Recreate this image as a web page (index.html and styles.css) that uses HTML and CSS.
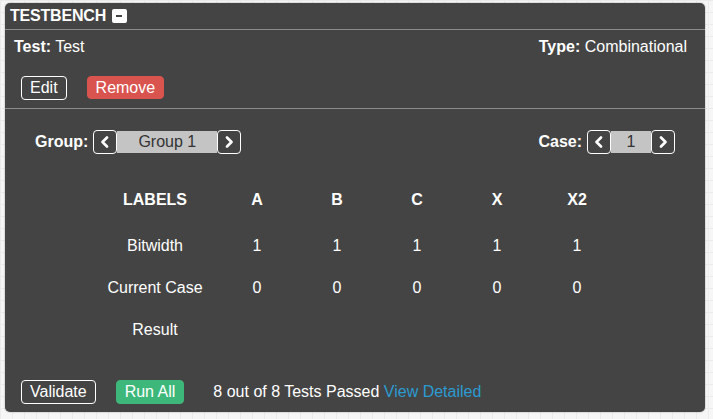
FILE: index.html
```html
<!DOCTYPE html>
<html>
<head>
<meta charset="utf-8">
<link rel="stylesheet" href="styles.css">
</head>
<body>
<div class="panel">
  <div class="header">
    <span class="title">TESTBENCH</span>
    <span class="minimize"><span class="bar"></span></span>
  </div>
  <div class="section top">
    <div class="info">
      <span><b>Test:</b> Test</span>
      <span><b>Type:</b> Combinational</span>
    </div>
    <div class="actions">
      <button class="btn outline">Edit</button>
      <button class="btn red">Remove</button>
    </div>
  </div>
  <div class="section main">
    <div class="selectors">
      <div class="sel">
        <span class="sel-label">Group:</span>
        <span class="arrow"><svg width="10" height="12" viewBox="0 0 10 12"><polyline points="7,1.5 2.5,6 7,10.5" fill="none" stroke="#fff" stroke-width="2.6" stroke-linecap="round" stroke-linejoin="round"/></svg></span>
        <span class="sel-value wide">Group 1</span>
        <span class="arrow"><svg width="10" height="12" viewBox="0 0 10 12"><polyline points="3,1.5 7.5,6 3,10.5" fill="none" stroke="#fff" stroke-width="2.6" stroke-linecap="round" stroke-linejoin="round"/></svg></span>
      </div>
      <div class="sel">
        <span class="sel-label">Case:</span>
        <span class="arrow"><svg width="10" height="12" viewBox="0 0 10 12"><polyline points="7,1.5 2.5,6 7,10.5" fill="none" stroke="#fff" stroke-width="2.6" stroke-linecap="round" stroke-linejoin="round"/></svg></span>
        <span class="sel-value narrow">1</span>
        <span class="arrow"><svg width="10" height="12" viewBox="0 0 10 12"><polyline points="3,1.5 7.5,6 3,10.5" fill="none" stroke="#fff" stroke-width="2.6" stroke-linecap="round" stroke-linejoin="round"/></svg></span>
      </div>
    </div>
    <table class="grid">
      <tr class="head"><th class="first">LABELS</th><th>A</th><th>B</th><th>C</th><th>X</th><th>X2</th></tr>
      <tr><td class="first">Bitwidth</td><td>1</td><td>1</td><td>1</td><td>1</td><td>1</td></tr>
      <tr><td class="first">Current Case</td><td>0</td><td>0</td><td>0</td><td>0</td><td>0</td></tr>
      <tr><td class="first">Result</td><td></td><td></td><td></td><td></td><td></td></tr>
    </table>
    <div class="footer">
      <button class="btn outline">Validate</button>
      <button class="btn green">Run All</button>
      <span class="status">8 out of 8 Tests Passed <span class="link">View Detailed</span></span>
    </div>
  </div>
</div>
</body>
</html>
```
FILE: styles.css
```css
* { box-sizing: border-box; }
html, body { margin: 0; padding: 0; }
body {
  width: 713px;
  height: 419px;
  background-color: #f6f6f6;
  background-image:
    linear-gradient(to right, #ebebeb 1px, transparent 1px),
    linear-gradient(to bottom, #ebebeb 1px, transparent 1px);
  background-size: 12px 12px;
  font-family: "Liberation Sans", Arial, sans-serif;
  font-size: 16px;
  color: #fff;
  padding: 3px 0 0 5px;
}
.panel {
  width: 700px;
  height: 409px;
  background: #444;
  border-radius: 5px;
  box-shadow: 0 0 2px rgba(0,0,0,0.35);
  display: flex;
  flex-direction: column;
  overflow: hidden;
}
.header {
  height: 27px;
  border-bottom: 1px solid #8c8c8c;
  display: flex;
  align-items: center;
  padding-left: 5px;
  padding-bottom: 1px;
}
.title {
  font-weight: bold;
  font-size: 16px;
  letter-spacing: -0.2px;
}
.minimize {
  width: 15px;
  height: 14px;
  background: #fff;
  border-radius: 2px;
  margin-left: 6px;
  display: flex;
  align-items: center;
  justify-content: center;
}
.minimize .bar {
  width: 6px;
  height: 2px;
  background: #444;
}
.section.top {
  border-bottom: 1px solid #8c8c8c;
  padding: 8px 18px 8px 9px;
  height: 79px;
}
.info {
  display: flex;
  justify-content: space-between;
  line-height: 18px;
}
.info b { font-weight: bold; }
.actions {
  display: flex;
  gap: 20px;
  margin-top: 20px;
  padding-left: 7px;
}
.btn {
  font-family: "Liberation Sans", Arial, sans-serif;
  font-size: 16px;
  color: #fff;
  height: 24px;
  line-height: 20px;
  padding: 0 8px;
  border-radius: 4px;
  border: 1px solid transparent;
  background: none;
  margin: 0;
}
.btn.outline { border-color: #fff; }
.btn.red { background: #d9534f; border-color: #d9534f; height: 23px; }
.btn.green { background: #3db87a; border-color: #3db87a; }
.section.main {
  flex: 1;
  display: flex;
  flex-direction: column;
  padding: 21px 30px 8px 30px;
}
.selectors {
  display: flex;
  justify-content: space-between;
}
.sel {
  display: flex;
  align-items: center;
  height: 24px;
}
.sel-label {
  font-weight: bold;
  margin-right: 5px;
}
.arrow {
  width: 24px;
  height: 24px;
  border: 1px solid #fff;
  border-radius: 4px;
  display: flex;
  align-items: center;
  justify-content: center;
}
.sel-value {
  height: 22px;
  background: #c4c4c4;
  color: #333;
  display: flex;
  align-items: center;
  justify-content: center;
}
.sel-value.wide { width: 100px; }
.sel-value.narrow { width: 40px; }
.grid {
  border-collapse: collapse;
  table-layout: fixed;
  align-self: flex-start;
  width: 524px;
  margin-top: 21px;
  margin-left: 58px;
}
.grid th, .grid td {
  width: 80px;
  padding: 0;
  text-align: center;
  font-size: 16px;
}
.grid .first { width: 124px; }
.grid tr { height: 42px; }
.grid tr.head { height: 50px; }
.grid th { font-weight: bold; }
.footer {
  margin-top: auto;
  display: flex;
  align-items: center;
  margin-left: -14px;
}
.footer .btn.green { margin-left: 20px; }
.status {
  margin-left: 29px;
}
.link { color: #2b9bd2; }
```
